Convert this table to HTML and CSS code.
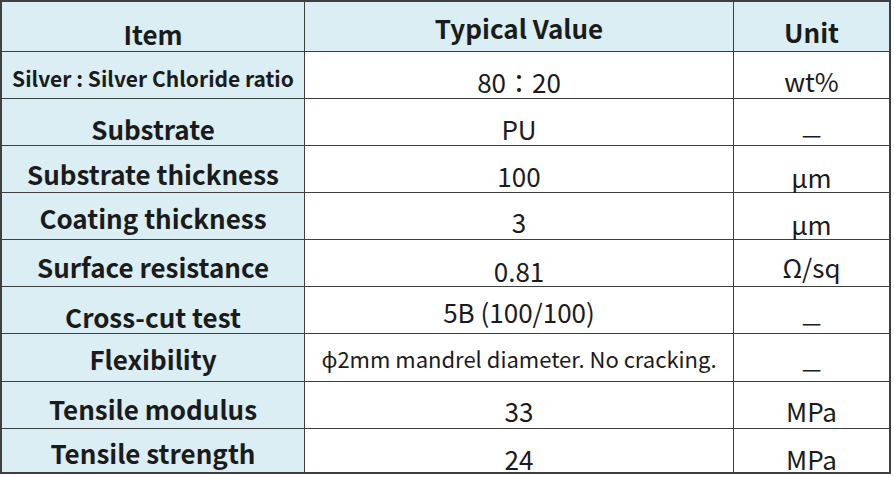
FILE: index.html
```html
<!DOCTYPE html>
<html lang="en">
<head>
<meta charset="utf-8">
<title>Typical Values</title>
<link rel="stylesheet" href="styles.css">
</head>
<body>
<div class="spec">
  <div class="cell head pb6">Item</div>
  <div class="cell head pb12">Typical Value</div>
  <div class="cell head pb8">Unit</div>

  <div class="cell label small pb11">Silver : Silver Chloride ratio</div>
  <div class="cell value pb5">80：20</div>
  <div class="cell value pb6">wt%</div>

  <div class="cell label pb5">Substrate</div>
  <div class="cell value pb5">PU</div>
  <div class="cell value pb10"><span class="dash">—</span></div>

  <div class="cell label pb7">Substrate thickness</div>
  <div class="cell value pb5">100</div>
  <div class="cell value pb4">μm</div>

  <div class="cell label pb10">Coating thickness</div>
  <div class="cell value pb6">3</div>
  <div class="cell value pb4">μm</div>

  <div class="cell label pb8">Surface resistance</div>
  <div class="cell value pb4">0.81</div>
  <div class="cell value pb8">Ω/sq</div>

  <div class="cell label pb5">Cross-cut test</div>
  <div class="cell value pb10">5B (100/100)</div>
  <div class="cell value pb10"><span class="dash">—</span></div>

  <div class="cell label pb11">Flexibility</div>
  <div class="cell value note pb14">ϕ2mm mandrel diameter. No cracking.</div>
  <div class="cell value pb12"><span class="dash">—</span></div>

  <div class="cell label pb8">Tensile modulus</div>
  <div class="cell value pb6">33</div>
  <div class="cell value pb6">MPa</div>

  <div class="cell label pb8">Tensile strength</div>
  <div class="cell value pb2">24</div>
  <div class="cell value pb2">MPa</div>
</div>
</body>
</html>
```

FILE: styles.css
```css
html, body {
  margin: 0;
  padding: 0;
  background: #ffffff;
}

body {
  font-family: "Noto Sans CJK JP", "Noto Sans", sans-serif;
  color: #1b1b1b;
}

.spec {
  display: grid;
  grid-template-columns: 302px 428px 155px;
  grid-template-rows: 49px repeat(6, 46px) 47px 46px 43px;
  gap: 1px;
  width: 887px;
  background: #3f3f3f;
  border: 2px solid #3f3f3f;
}

.cell {
  display: flex;
  align-items: flex-end;
  justify-content: center;
  line-height: 1;
  white-space: nowrap;
  background: #ffffff;
}

.head {
  background: #daeef3;
  font-weight: 700;
  font-size: 26px;
}

.label {
  background: #daeef3;
  font-weight: 700;
  font-size: 26px;
}

.label.small {
  font-size: 21px;
}

.value {
  font-weight: 400;
  font-size: 26px;
}

.value.note {
  font-size: 22px;
}

.dash {
  display: inline-block;
  font-size: 22px;
  transform: translateY(0.32em);
}

.pb2 { padding-bottom: 0; }
.pb4 { padding-bottom: 2px; }
.pb5 { padding-bottom: 3px; }
.pb6 { padding-bottom: 4px; }
.pb7 { padding-bottom: 5px; }
.pb8 { padding-bottom: 6px; }
.pb10 { padding-bottom: 8px; }
.pb11 { padding-bottom: 9px; }
.pb12 { padding-bottom: 10px; }
.pb14 { padding-bottom: 12px; }
```
